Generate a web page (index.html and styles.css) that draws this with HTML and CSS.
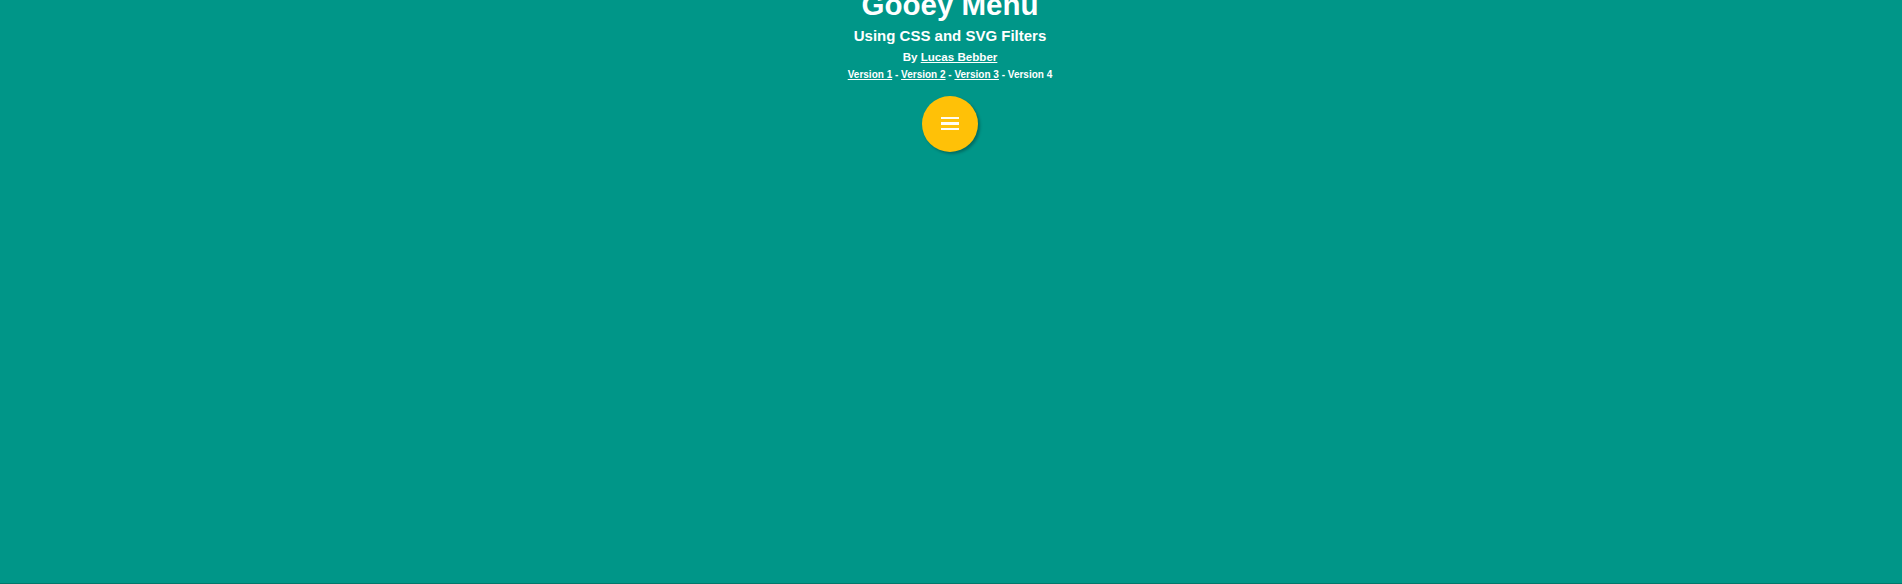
FILE: index.html
```html
<!DOCTYPE html>
<html lang="en">
<head>
<meta charset="utf-8">
<title>Gooey Menu</title>
<link rel="stylesheet" href="styles.css">
</head>
<body>
<header class="intro">
  <h1 class="title">Gooey Menu</h1>
  <h2 class="subtitle">Using CSS and SVG Filters</h2>
  <h3 class="byline">By <a href="#">Lucas Bebber</a></h3>
  <h3 class="versions"><a href="#">Version 1</a> - <a href="#">Version 2</a> - <a href="#">Version 3</a> - Version 4</h3>
</header>
<nav class="menu">
  <button class="menu-open-button" aria-label="Open menu">
    <span class="hamburger"></span>
    <span class="hamburger"></span>
    <span class="hamburger"></span>
  </button>
</nav>
</body>
</html>
```
FILE: styles.css
```css
html, body {
  margin: 0;
  padding: 0;
  height: 100%;
}
body {
  background: #009688;
  color: #ffffff;
  font-family: "Liberation Sans", Arial, sans-serif;
  font-weight: bold;
  text-align: center;
  overflow: hidden;
  padding-right: 2px;
  box-sizing: border-box;
  box-shadow: inset 0 -1px 0 #00796b;
}
.intro {
  display: flex;
  flex-direction: column;
  align-items: center;
  margin-top: -10px;
}
.intro h1, .intro h2, .intro h3 {
  margin: 0;
  font-weight: bold;
}
.title {
  font-size: 29.5px;
  line-height: 30px;
}
.subtitle {
  font-size: 15px;
  line-height: 18px;
  margin-top: 6.5px !important;
}
.byline {
  font-size: 11.6px;
  line-height: 14px;
  margin-top: 5.5px !important;
}
.versions {
  font-size: 10px;
  line-height: 12px;
  margin-top: 5px !important;
}
.intro a {
  color: #ffffff;
  text-decoration: underline;
}
.menu {
  display: flex;
  justify-content: center;
  margin-top: 14.5px;
}
.menu-open-button {
  width: 56px;
  height: 56px;
  border-radius: 50%;
  border: none;
  padding: 0;
  background: #ffc107;
  box-shadow: 2px 2px 3px rgba(0, 0, 0, 0.28);
  display: flex;
  flex-direction: column;
  align-items: center;
  justify-content: center;
  gap: 3.2px;
  cursor: pointer;
}
.hamburger {
  display: block;
  width: 18px;
  height: 2.2px;
  background: rgba(255, 255, 255, 0.95);
}
```
